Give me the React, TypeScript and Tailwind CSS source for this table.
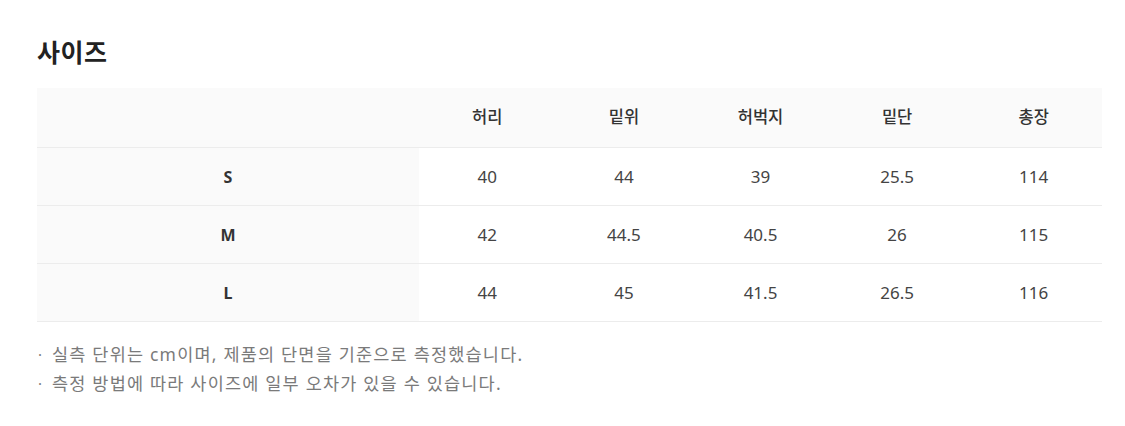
import React from "react";

const cols = ["허리", "밑위", "허벅지", "밑단", "총장"];
const rows: [string, string[]][] = [
  ["S", ["40", "44", "39", "25.5", "114"]],
  ["M", ["42", "44.5", "40.5", "26", "115"]],
  ["L", ["44", "45", "41.5", "26.5", "116"]],
];

export default function App() {
  return (
    <div
      className="w-[1125px] h-[426px] bg-white pl-[37px] pr-[23px] pt-[34px]"
      style={{ fontFamily: '"Noto Sans", "Noto Sans CJK KR", sans-serif' }}
    >
      <h2 className="text-[25px] leading-[36px] font-bold text-[#222] tracking-[0.5px]">사이즈</h2>
      <div className="mt-[18px] w-[1065px]">
        <div className="grid grid-cols-[382px_1fr_1fr_1fr_1fr_1fr] h-[60px] bg-[#fafafa] border-b border-[#ececec] items-center">
          <div />
          {cols.map((c) => (
            <div key={c} className="text-center text-[16.5px] font-medium text-[#333]">
              {c}
            </div>
          ))}
        </div>
        {rows.map(([s, vals]) => (
          <div
            key={s}
            className="grid grid-cols-[382px_1fr_1fr_1fr_1fr_1fr] h-[58px] border-b border-[#ececec] items-center"
          >
            <div className="h-full flex items-center justify-center bg-[#fafafa] text-[16px] font-bold text-[#333]">
              {s}
            </div>
            {vals.map((v, i) => (
              <div key={i} className="text-center text-[17px] text-[#444]">
                {v}
              </div>
            ))}
          </div>
        ))}
      </div>
      <div className="mt-[18px] text-[17.5px] tracking-[1.2px] leading-[29px] text-[#7a7a7a]">
        <div className="flex">
          <span className="w-[15px] pl-[1px] text-[15px]">·</span>
          <span>실측 단위는 cm이며, 제품의 단면을 기준으로 측정했습니다.</span>
        </div>
        <div className="flex">
          <span className="w-[15px] pl-[1px] text-[15px]">·</span>
          <span>측정 방법에 따라 사이즈에 일부 오차가 있을 수 있습니다.</span>
        </div>
      </div>
    </div>
  );
}
